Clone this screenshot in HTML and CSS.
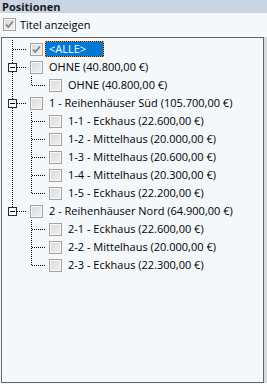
FILE: index.html
```html
<!DOCTYPE html>
<html lang="de">
<head>
<meta charset="utf-8">
<title>Positionen</title>
<link rel="stylesheet" href="styles.css">
</head>
<body>
<div class="panel">
  <div class="head">Positionen</div>
  <div class="opt">
    <span class="cb on"><svg width="11" height="11" viewBox="0 0 11 11"><path d="M2 5.5 L4.3 8 L9 2.5" fill="none" stroke="#7d7d7d" stroke-width="1.6"/></svg></span>
    <span class="opt-label">Titel anzeigen</span>
  </div>
  <div class="tree-wrap">
    <div class="tree">
      <div class="row">
        <svg class="con" width="28" height="18"><line x1="10.5" y1="0" x2="10.5" y2="18"/><line x1="11" y1="9.5" x2="24" y2="9.5"/></svg>
        <span class="cb on"><svg width="11" height="11" viewBox="0 0 11 11"><path d="M2 5.5 L4.3 8 L9 2.5" fill="none" stroke="#7d7d7d" stroke-width="1.6"/></svg></span>
        <span class="lbl sel">&lt;ALLE&gt;</span>
      </div>
      <div class="row">
        <svg class="con" width="28" height="18"><line x1="10.5" y1="0" x2="10.5" y2="18"/><line x1="11" y1="9.5" x2="24" y2="9.5"/><rect class="exp" x="6.5" y="5.5" width="8" height="8"/><line class="minus" x1="8" y1="9.5" x2="13" y2="9.5"/></svg>
        <span class="cb"></span>
        <span class="lbl">OHNE (40.800,00 €)</span>
      </div>
      <div class="row">
        <svg class="pass" width="19" height="18"><line x1="10.5" y1="0" x2="10.5" y2="18"/></svg>
        <svg class="con" width="28" height="18"><line x1="10.5" y1="0" x2="10.5" y2="10"/><line x1="11" y1="9.5" x2="24" y2="9.5"/></svg>
        <span class="cb"></span>
        <span class="lbl">OHNE (40.800,00 €)</span>
      </div>
      <div class="row">
        <svg class="con" width="28" height="18"><line x1="10.5" y1="0" x2="10.5" y2="18"/><line x1="11" y1="9.5" x2="24" y2="9.5"/><rect class="exp" x="6.5" y="5.5" width="8" height="8"/><line class="minus" x1="8" y1="9.5" x2="13" y2="9.5"/></svg>
        <span class="cb"></span>
        <span class="lbl">1 - Reihenhäuser Süd (105.700,00 €)</span>
      </div>
      <div class="row">
        <svg class="pass" width="19" height="18"><line x1="10.5" y1="0" x2="10.5" y2="18"/></svg>
        <svg class="con" width="28" height="18"><line x1="10.5" y1="0" x2="10.5" y2="18"/><line x1="11" y1="9.5" x2="24" y2="9.5"/></svg>
        <span class="cb"></span>
        <span class="lbl">1-1 - Eckhaus (22.600,00 €)</span>
      </div>
      <div class="row">
        <svg class="pass" width="19" height="18"><line x1="10.5" y1="0" x2="10.5" y2="18"/></svg>
        <svg class="con" width="28" height="18"><line x1="10.5" y1="0" x2="10.5" y2="18"/><line x1="11" y1="9.5" x2="24" y2="9.5"/></svg>
        <span class="cb"></span>
        <span class="lbl">1-2 - Mittelhaus (20.000,00 €)</span>
      </div>
      <div class="row">
        <svg class="pass" width="19" height="18"><line x1="10.5" y1="0" x2="10.5" y2="18"/></svg>
        <svg class="con" width="28" height="18"><line x1="10.5" y1="0" x2="10.5" y2="18"/><line x1="11" y1="9.5" x2="24" y2="9.5"/></svg>
        <span class="cb"></span>
        <span class="lbl">1-3 - Mittelhaus (20.600,00 €)</span>
      </div>
      <div class="row">
        <svg class="pass" width="19" height="18"><line x1="10.5" y1="0" x2="10.5" y2="18"/></svg>
        <svg class="con" width="28" height="18"><line x1="10.5" y1="0" x2="10.5" y2="18"/><line x1="11" y1="9.5" x2="24" y2="9.5"/></svg>
        <span class="cb"></span>
        <span class="lbl">1-4 - Mittelhaus (20.300,00 €)</span>
      </div>
      <div class="row">
        <svg class="pass" width="19" height="18"><line x1="10.5" y1="0" x2="10.5" y2="18"/></svg>
        <svg class="con" width="28" height="18"><line x1="10.5" y1="0" x2="10.5" y2="10"/><line x1="11" y1="9.5" x2="24" y2="9.5"/></svg>
        <span class="cb"></span>
        <span class="lbl">1-5 - Eckhaus (22.200,00 €)</span>
      </div>
      <div class="row">
        <svg class="con" width="28" height="18"><line x1="10.5" y1="0" x2="10.5" y2="10"/><line x1="11" y1="9.5" x2="24" y2="9.5"/><rect class="exp" x="6.5" y="5.5" width="8" height="8"/><line class="minus" x1="8" y1="9.5" x2="13" y2="9.5"/></svg>
        <span class="cb"></span>
        <span class="lbl">2 - Reihenhäuser Nord (64.900,00 €)</span>
      </div>
      <div class="row">
        <svg class="pass" width="19" height="18"></svg>
        <svg class="con" width="28" height="18"><line x1="10.5" y1="0" x2="10.5" y2="18"/><line x1="11" y1="9.5" x2="24" y2="9.5"/></svg>
        <span class="cb"></span>
        <span class="lbl">2-1 - Eckhaus (22.600,00 €)</span>
      </div>
      <div class="row">
        <svg class="pass" width="19" height="18"></svg>
        <svg class="con" width="28" height="18"><line x1="10.5" y1="0" x2="10.5" y2="18"/><line x1="11" y1="9.5" x2="24" y2="9.5"/></svg>
        <span class="cb"></span>
        <span class="lbl">2-2 - Mittelhaus (20.000,00 €)</span>
      </div>
      <div class="row">
        <svg class="pass" width="19" height="18"></svg>
        <svg class="con" width="28" height="18"><line x1="10.5" y1="0" x2="10.5" y2="10"/><line x1="11" y1="9.5" x2="24" y2="9.5"/></svg>
        <span class="cb"></span>
        <span class="lbl">2-3 - Eckhaus (22.300,00 €)</span>
      </div>
    </div>
  </div>
</div>
</body>
</html>
```
FILE: styles.css
```css
html, body {
  margin: 0;
  padding: 0;
}
body {
  width: 267px;
  height: 384px;
  overflow: hidden;
  background: #f4f8fb;
  font-family: "Open Sans", "Noto Sans", sans-serif;
  font-size: 11px;
  color: #000;
}
.panel {
  display: flex;
  flex-direction: column;
  height: 384px;
}
.head {
  height: 13px;
  line-height: 13px;
  background: #c9d5e3;
  font-weight: bold;
  padding-left: 2px;
  color: #1a1a1a;
}
.opt {
  height: 22px;
  display: flex;
  align-items: center;
  padding-left: 3px;
}
.opt-label {
  margin-left: 4px;
}
.tree-wrap {
  margin-top: 2px;
  margin-left: 1px;
  height: 346px;
  display: flex;
}
.tree {
  width: 263px;
  box-sizing: border-box;
  border: 1px solid #646464;
  box-shadow: 3px 0 0 #d8dadc;
  padding-top: 2px;
  background: #f4f8fb;
}
.row {
  height: 18px;
  display: flex;
  align-items: center;
  white-space: nowrap;
}
.row svg {
  display: block;
  flex: none;
}
.con line, .pass line {
  stroke: #000;
  stroke-width: 1;
  stroke-dasharray: 1 1;
  shape-rendering: crispEdges;
}
.con .exp {
  fill: #fff;
  stroke: #2a2a2a;
  stroke-width: 1;
  shape-rendering: crispEdges;
}
.con .minus {
  stroke: #000;
  stroke-dasharray: none;
}
.cb {
  flex: none;
  width: 13px;
  height: 13px;
  box-sizing: border-box;
  border: 1px solid #a2a2a2;
  background: linear-gradient(135deg, #d8d8d8, #f2f2f2);
  box-shadow: inset 0 0 0 1px #f7f7f7;
  display: flex;
  align-items: center;
  justify-content: center;
}
.cb svg {
  display: block;
}
.lbl {
  margin-left: 2px;
  padding: 0 3px;
  border: 1px solid transparent;
  line-height: 14px;
}
.lbl.sel {
  width: 59px;
  box-sizing: border-box;
  color: #fff;
  border: 1px dotted #ff9c3a;
  background: linear-gradient(#0078d7, #0078d7) padding-box, linear-gradient(#1c1c1c, #1c1c1c) border-box;
}
```
